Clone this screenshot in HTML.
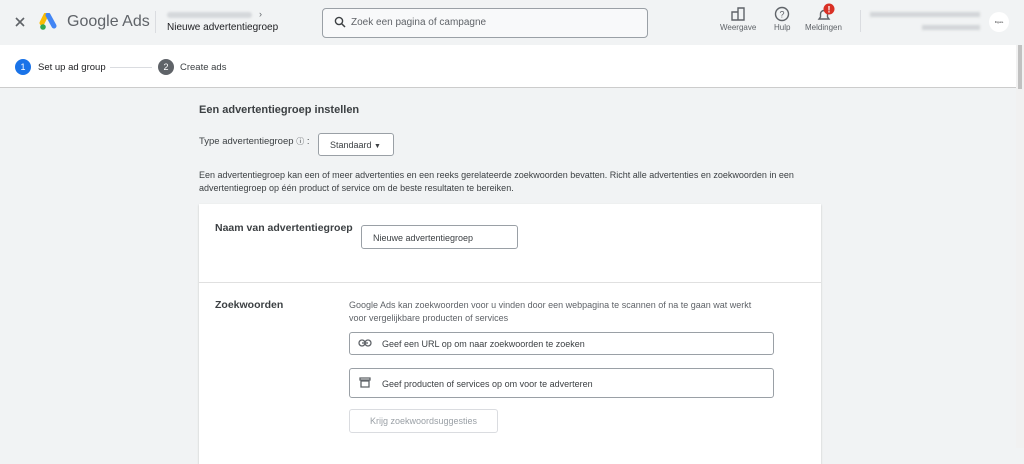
<!DOCTYPE html>
<html><head><style>
*{box-sizing:border-box;margin:0;padding:0}
body{width:1024px;height:448px;overflow:hidden;background:#f1f3f4;font-family:"Liberation Sans",Arial,sans-serif;color:#202124;position:relative}
.hdr{position:absolute;top:0;left:0;width:1024px;height:45px;background:#f1f3f4}
.step{position:absolute;top:45px;left:0;width:1016px;height:43px;background:#fff;border-bottom:1px solid #ccc}
.sb{position:absolute;top:45px;right:0;width:8px;height:403px;background:#f1f1f1}
.sb div{height:44px;background:#c1c1c1;width:4px;margin-left:2px}
.t{position:absolute;white-space:nowrap}
.card{position:absolute;left:199px;top:204px;width:622px;height:260px;background:#fff;box-shadow:0 1px 2px rgba(0,0,0,.2)}
.inp{position:absolute;border:1px solid #9aa0a6;border-radius:3px;background:#fff;font-size:9px;color:#3c4043}
</style></head><body>
<div class="hdr"></div>
<svg class="t" style="left:15px;top:17px" width="10" height="10"><path d="M1 1L9 9M9 1L1 9" stroke="#5f6368" stroke-width="1.6"/></svg>
<svg class="t" style="left:39px;top:13px" width="20" height="18" viewBox="0 0 20 18"><path d="M7 2 L3 10" stroke="#fbbc04" stroke-width="5" stroke-linecap="round"/><path d="M9 2 L15 13" stroke="#4285f4" stroke-width="5" stroke-linecap="round"/><circle cx="4" cy="14" r="2.8" fill="#34a853"/></svg>
<div class="t" style="left:67px;top:13px;font-size:16px;color:#5f6368">Google Ads</div>
<div class="t" style="left:155px;top:11px;width:1px;height:22px;background:#dadce0"></div>
<div class="t" style="left:167px;top:12px;width:85px;height:6px;background:#d5d8db;border-radius:3px;filter:blur(1px)"></div>
<div class="t" style="left:259px;top:9px;font-size:9px;color:#5f6368">›</div>
<div class="t" style="left:167px;top:22px;font-size:10px;color:#202124">Nieuwe advertentiegroep</div>
<div class="t" style="left:322px;top:8px;width:326px;height:30px;border:1px solid #9aa0a6;border-radius:4px;background:#f8f9fa"></div>
<svg class="t" style="left:334px;top:16px" width="12" height="12" viewBox="0 0 12 12"><circle cx="5" cy="5" r="3.6" stroke="#3c4043" stroke-width="1.4" fill="none"/><path d="M7.6 7.6 L11 11" stroke="#3c4043" stroke-width="1.5"/></svg>
<div class="t" style="left:351px;top:17px;font-size:10px;color:#5f6368">Zoek een pagina of campagne</div>
<svg class="t" style="left:731px;top:7px" width="14" height="14"><path d="M1 5h6v8H1zM7 1h6v12H7z" fill="none" stroke="#5f6368" stroke-width="1.4"/></svg>
<div class="t" style="left:720px;top:23px;font-size:8px;color:#5f6368">Weergave</div>
<svg class="t" style="left:774px;top:6px" width="16" height="16"><circle cx="8" cy="8" r="6.5" stroke="#5f6368" stroke-width="1.4" fill="none"/><text x="8" y="11.5" font-size="9" text-anchor="middle" fill="#5f6368" font-family="Liberation Sans">?</text></svg>
<div class="t" style="left:774px;top:23px;font-size:8px;color:#5f6368">Hulp</div>
<svg class="t" style="left:816px;top:2px" width="20" height="20"><path d="M3 17h10l-1.5-2V12a3.5 3.5 0 0 0-7 0v3z" fill="none" stroke="#5f6368" stroke-width="1.4"/><circle cx="13" cy="7" r="5.5" fill="#d93025"/><text x="13" y="10.5" font-size="9" font-weight="bold" text-anchor="middle" fill="#fff" font-family="Liberation Sans">!</text></svg>
<div class="t" style="left:805px;top:23px;font-size:8px;color:#5f6368">Meldingen</div>
<div class="t" style="left:860px;top:10px;width:1px;height:22px;background:#dadce0"></div>
<div class="t" style="left:870px;top:12px;width:110px;height:5px;background:#d2d5d8;filter:blur(1.2px)"></div>
<div class="t" style="left:922px;top:25px;width:58px;height:5px;background:#d2d5d8;filter:blur(1.2px)"></div>
<div class="t" style="left:989px;top:12px;width:20px;height:20px;border-radius:50%;background:#fff;font-size:3px;line-height:20px;text-align:center">Figure</div>
<div class="step"></div>
<div class="t" style="left:15px;top:59px;width:16px;height:16px;border-radius:50%;background:#1a73e8;color:#fff;font-size:9px;text-align:center;line-height:16px">1</div>
<div class="t" style="left:38px;top:62px;font-size:9.5px">Set up ad group</div>
<div class="t" style="left:110px;top:67px;width:42px;height:1px;background:#dadce0"></div>
<div class="t" style="left:158px;top:59px;width:16px;height:16px;border-radius:50%;background:#5f6368;color:#fff;font-size:9px;text-align:center;line-height:16px">2</div>
<div class="t" style="left:180px;top:62px;font-size:9.5px;color:#3c4043">Create ads</div>
<div class="sb"><div></div></div>
<div class="t" style="left:199px;top:104px;font-size:11px;font-weight:bold;color:#3c4043">Een advertentiegroep instellen</div>
<div class="t" style="left:199px;top:136px;font-size:9.5px;color:#3c4043">Type advertentiegroep <span style="font-size:8px">ⓘ</span> :</div>
<div class="t" style="left:318px;top:133px;width:76px;height:23px;border:1px solid #9aa0a6;border-radius:3px;background:#fff;font-size:9px;padding:6px 0 0 11px;color:#3c4043">Standaard <span style="font-size:7px">▼</span></div>
<div class="t" style="left:199px;top:169px;font-size:9px;line-height:13px;color:#3c4043">Een advertentiegroep kan een of meer advertenties en een reeks gerelateerde zoekwoorden bevatten. Richt alle advertenties en zoekwoorden in een<br>advertentiegroep op één product of service om de beste resultaten te bereiken.</div>
<div class="card">
<div class="t" style="left:16px;top:18px;font-size:10.5px;font-weight:bold;color:#3c4043">Naam van advertentiegroep</div>
<div class="inp" style="left:162px;top:21px;width:157px;height:24px;padding:7px 0 0 11px">Nieuwe advertentiegroep</div>
<div class="t" style="left:0;top:78px;width:622px;height:1px;background:#e0e0e0"></div>
<div class="t" style="left:16px;top:95px;font-size:10.5px;font-weight:bold;color:#3c4043">Zoekwoorden</div>
<div class="t" style="left:150px;top:95px;font-size:9px;line-height:13px;color:#5f6368">Google Ads kan zoekwoorden voor u vinden door een webpagina te scannen of na te gaan wat werkt<br>voor vergelijkbare producten of services</div>
<div class="inp" style="left:150px;top:128px;width:425px;height:23px;padding:6px 0 0 32px">Geef een URL op om naar zoekwoorden te zoeken</div>
<svg class="t" style="left:159px;top:135px" width="14" height="8"><rect x="1" y="1" width="6" height="6" rx="3" fill="none" stroke="#5f6368" stroke-width="1.3"/><rect x="7" y="1" width="6" height="6" rx="3" fill="none" stroke="#5f6368" stroke-width="1.3"/><path d="M4 4h6" stroke="#5f6368" stroke-width="1.3"/></svg>
<div class="inp" style="left:150px;top:164px;width:425px;height:30px;padding:10px 0 0 32px">Geef producten of services op om voor te adverteren</div>
<svg class="t" style="left:160px;top:173px" width="12" height="11"><path d="M1 1h10v2H1zM2 4h8v6H2z" fill="none" stroke="#5f6368" stroke-width="1.3"/></svg>
<div class="t" style="left:150px;top:205px;width:149px;height:24px;border:1px solid #dadce0;border-radius:3px;font-size:9px;color:#9aa0a6;text-align:center;line-height:22px">Krijg zoekwoordsuggesties</div>
</div>
</body></html>
